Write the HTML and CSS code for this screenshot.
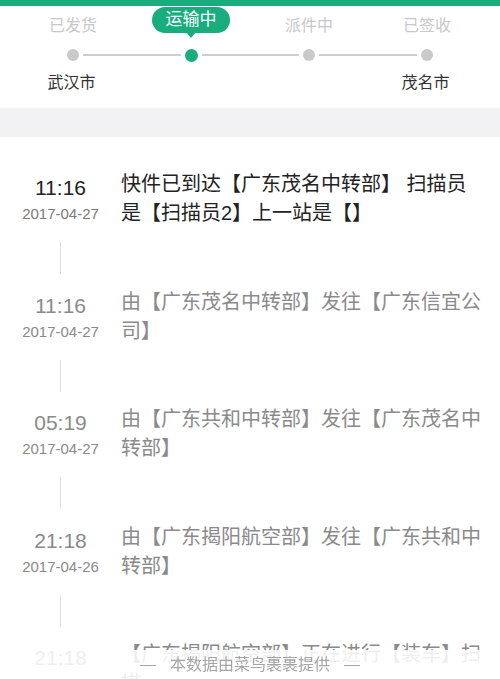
FILE: index.html
```html
<!DOCTYPE html>
<html lang="zh-CN">

<head>
    <meta charset="UTF-8">
    <title>物流详情</title>
    <link rel="stylesheet" href="styles.css">
</head>

<body>
    <div class="topbar"></div>

    <!-- 物流进度 -->
    <div class="progress">
        <div class="step">
            <div class="step-name"><span>已发货</span></div>
            <div class="track"><i class="bar hide"></i><b class="dot"></b><i class="bar"></i></div>
            <div class="city">武汉市</div>
        </div>
        <div class="step">
            <div class="step-name"><span class="pill">运输中</span></div>
            <div class="track"><i class="bar"></i><b class="dot on"></b><i class="bar"></i></div>
            <div class="city"></div>
        </div>
        <div class="step">
            <div class="step-name"><span>派件中</span></div>
            <div class="track"><i class="bar"></i><b class="dot"></b><i class="bar"></i></div>
            <div class="city"></div>
        </div>
        <div class="step">
            <div class="step-name"><span>已签收</span></div>
            <div class="track"><i class="bar"></i><b class="dot"></b><i class="bar hide"></i></div>
            <div class="city">茂名市</div>
        </div>
    </div>

    <div class="gap"></div>

    <!-- 物流记录 -->
    <ul class="list">
        <li class="item first">
            <div class="row">
                <div class="when">
                    <p class="time">11:16</p>
                    <p class="date">2017-04-27</p>
                </div>
                <div class="desc">快件已到达【广东茂名中转部】 扫描员是【扫描员2】上一站是【】</div>
            </div>
            <div class="link"></div>
        </li>
        <li class="item">
            <div class="row">
                <div class="when">
                    <p class="time">11:16</p>
                    <p class="date">2017-04-27</p>
                </div>
                <div class="desc">由【广东茂名中转部】发往【广东信宜公司】</div>
            </div>
            <div class="link"></div>
        </li>
        <li class="item">
            <div class="row">
                <div class="when">
                    <p class="time">05:19</p>
                    <p class="date">2017-04-27</p>
                </div>
                <div class="desc">由【广东共和中转部】发往【广东茂名中转部】</div>
            </div>
            <div class="link"></div>
        </li>
        <li class="item">
            <div class="row">
                <div class="when">
                    <p class="time">21:18</p>
                    <p class="date">2017-04-26</p>
                </div>
                <div class="desc">由【广东揭阳航空部】发往【广东共和中转部】</div>
            </div>
            <div class="link"></div>
        </li>
        <li class="item">
            <div class="row">
                <div class="when">
                    <p class="time">21:18</p>
                    <p class="date">2017-04-26</p>
                </div>
                <div class="desc">【广东揭阳航空部】正在进行【装车】扫描</div>
            </div>
        </li>
    </ul>

    <div class="footer"><i class="dash"></i>本数据由菜鸟裹裹提供<i class="dash"></i></div>
</body>

</html>
```

FILE: styles.css
```css
* {
    padding: 0;
    margin: 0;
    list-style: none;
    border: 0;
    box-sizing: border-box;
}

body {
    font-family: "Liberation Sans", "Noto Sans CJK SC", sans-serif;
    background: #fff;
    color: #222;
}

.topbar {
    height: 6px;
    background: #19ad7e;
}

/* 进度条 */
.progress {
    display: flex;
    padding: 0 14px 14px;
    background: #fff;
}

.step {
    flex: 1;
    text-align: center;
}

.step-name {
    height: 32px;
    display: flex;
    align-items: flex-end;
    justify-content: center;
    font-size: 16px;
    line-height: 24px;
    color: #c8c8c8;
}

.step-name .pill {
    position: relative;
    width: 78px;
    height: 26px;
    line-height: 26px;
    margin-bottom: 5px;
    border-radius: 13px;
    background: #19ad7e;
    color: #fff;
    font-size: 17px;
}

.step-name .pill::after {
    content: '';
    position: absolute;
    left: 50%;
    bottom: -5px;
    margin-left: -5px;
    border-left: 5px solid transparent;
    border-right: 5px solid transparent;
    border-top: 6px solid #19ad7e;
}

.track {
    display: flex;
    align-items: center;
    height: 14px;
    margin-top: 10px;
}

.track .bar {
    flex: 1;
    height: 2px;
    background: #cdcdcd;
}

.track .bar:first-child {
    margin-right: 4px;
}

.track .bar:last-child {
    margin-left: 4px;
}

.track .bar.hide {
    visibility: hidden;
}

.track .dot {
    width: 12px;
    height: 12px;
    border-radius: 50%;
    background: #cacaca;
}

.track .dot.on {
    width: 13px;
    height: 13px;
    background: #19ad7e;
}

.city {
    height: 22px;
    line-height: 22px;
    margin-top: 10px;
    padding-right: 3px;
    font-size: 16px;
    color: #333;
}

.gap {
    height: 29px;
    background: #f2f2f5;
}

/* 物流记录 */
.list {
    padding-top: 33px;
}

.item {
    margin-bottom: 13.5px;
}

.row {
    display: flex;
}

.when {
    width: 121px;
    padding-top: 5px;
    text-align: center;
    color: #8a8a8a;
}

.time {
    font-size: 21px;
    line-height: 26px;
}

.date {
    font-size: 15px;
    line-height: 26px;
    color: #8a8a8a;
}

.desc {
    flex: 1;
    padding-right: 15px;
    font-size: 20px;
    line-height: 29px;
    color: #8a8a8a;
}

.first .time,
.first .desc {
    color: #222;
}

.first .date {
    color: #7a7a7a;
}

.link {
    width: 1px;
    height: 32px;
    margin: 14px 0 0 60px;
    background: #dedede;
}

/* 底部说明 */
.footer {
    position: fixed;
    left: 0;
    right: 0;
    bottom: 0;
    height: 29px;
    line-height: 29px;
    text-align: center;
    font-size: 16px;
    color: #a5a5a5;
    background: rgba(255, 255, 255, 0.86);
}

.footer .dash {
    display: inline-block;
    width: 16px;
    height: 1px;
    margin: 0 14px;
    vertical-align: middle;
    background: #a5a5a5;
}
```
